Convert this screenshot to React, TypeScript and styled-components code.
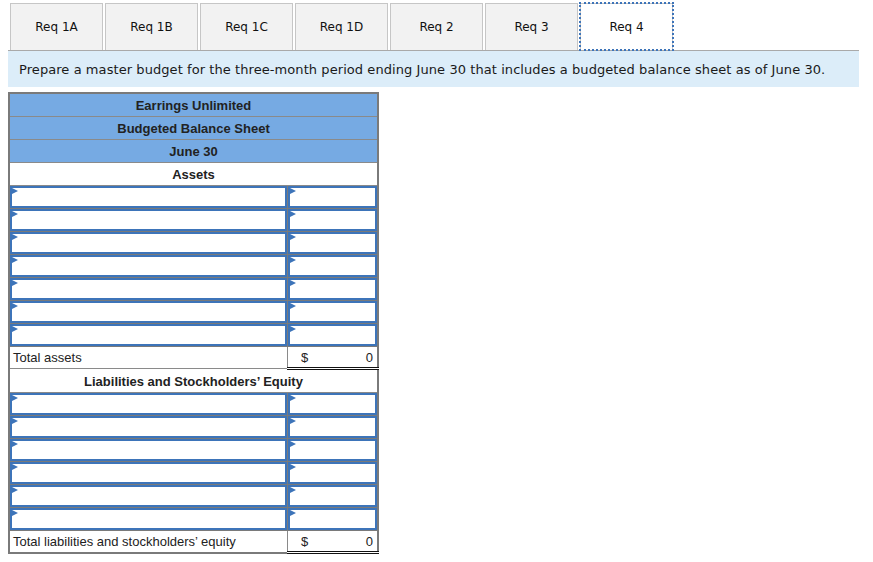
import React from 'react';
import styled, { createGlobalStyle } from 'styled-components';

const GlobalStyle = createGlobalStyle`
  body {
    margin: 0;
    background: #ffffff;
    font-family: "DejaVu Sans", Verdana, sans-serif;
  }
`;

const Page = styled.div`
  padding: 3px 14px 0 8px;
`;

const TabBar = styled.div`
  display: flex;
  gap: 2px;
  padding-left: 2px;
  border-bottom: 1px solid #a9a9a9;
`;

const Tab = styled.div<{ $active?: boolean }>`
  width: 93px;
  height: 47px;
  box-sizing: border-box;
  display: flex;
  align-items: center;
  justify-content: center;
  font-size: 12px;
  color: #111;
  background: ${(p) => (p.$active ? '#ffffff' : '#f2f2f2')};
  border: 1px solid #c6c6c6;
  border-bottom: none;
  outline: ${(p) => (p.$active ? '2px dotted #3d74b9' : 'none')};
  outline-offset: -1px;
  padding-bottom: 1px;
`;

const Instruction = styled.div`
  background: #dcedf9;
  height: 36px;
  display: flex;
  align-items: center;
  padding-left: 11px;
  font-size: 13px;
  letter-spacing: 0.07px;
  color: #1a1a1a;
`;

const Sheet = styled.table`
  margin-top: 5px;
  width: 371px;
  border-collapse: collapse;
  border: 2px solid #7a7a7a;
  font-family: "Liberation Sans", Arial, sans-serif;
  font-size: 13px;
  color: #222;
`;

const HeadCell = styled.td<{ $blue?: boolean }>`
  height: 22px;
  padding: 0;
  text-align: center;
  font-weight: bold;
  background: ${(p) => (p.$blue ? '#76aae3' : '#ffffff')};
  border: 1px solid #8a8a8a;
`;

const LabelCell = styled.td`
  height: 20px;
  padding: 0 0 0 3px;
  border: 1px solid #8a8a8a;
`;

const InputCell = styled.td<{ $w: number }>`
  width: ${(p) => p.$w}px;
  height: 22px;
  padding: 0;
  border: 1px solid #7a7a7a;
`;

const Field = styled.div`
  position: relative;
  height: 22px;
  box-sizing: border-box;
  border: 2px solid #3d74b9;

  &::before {
    content: '';
    position: absolute;
    left: 0;
    top: 0;
    border-left: 6px solid #3d74b9;
    border-top: 3px solid transparent;
    border-bottom: 3px solid transparent;
  }
`;

const TotalCell = styled.td`
  height: 20px;
  padding: 0 4px 0 13px;
  border: 1px solid #8a8a8a;
  border-top: 1px solid #111;
  border-bottom: 3px double #111;
`;

const Amount = styled.div`
  display: flex;
  justify-content: space-between;
`;

const InputRow: React.FC = () => (
  <tr>
    <InputCell $w={281}>
      <Field />
    </InputCell>
    <InputCell $w={90}>
      <Field />
    </InputCell>
  </tr>
);

const TotalRow: React.FC<{ label: string }> = ({ label }) => (
  <tr>
    <LabelCell>{label}</LabelCell>
    <TotalCell>
      <Amount>
        <span>$</span>
        <span>0</span>
      </Amount>
    </TotalCell>
  </tr>
);

const tabs = ['Req 1A', 'Req 1B', 'Req 1C', 'Req 1D', 'Req 2', 'Req 3', 'Req 4'];

const App: React.FC = () => {
  return (
    <Page>
      <GlobalStyle />
      <TabBar>
        {tabs.map((t) => (
          <Tab key={t} $active={t === 'Req 4'}>
            {t}
          </Tab>
        ))}
      </TabBar>
      <Instruction>
        Prepare a master budget for the three-month period ending June 30 that includes a budgeted balance sheet as of June 30.
      </Instruction>

      <Sheet>
        <tbody>
          <tr>
            <HeadCell $blue colSpan={2}>Earrings Unlimited</HeadCell>
          </tr>
          <tr>
            <HeadCell $blue colSpan={2}>Budgeted Balance Sheet</HeadCell>
          </tr>
          <tr>
            <HeadCell $blue colSpan={2}>June 30</HeadCell>
          </tr>
          <tr>
            <HeadCell colSpan={2}>Assets</HeadCell>
          </tr>
          {[0, 1, 2, 3, 4, 5, 6].map((i) => (
            <InputRow key={'a' + i} />
          ))}
          <TotalRow label="Total assets" />
          <tr>
            <HeadCell colSpan={2}>Liabilities and Stockholders’ Equity</HeadCell>
          </tr>
          {[0, 1, 2, 3, 4, 5].map((i) => (
            <InputRow key={'l' + i} />
          ))}
          <TotalRow label="Total liabilities and stockholders’ equity" />
        </tbody>
      </Sheet>
    </Page>
  );
};

export default App;
